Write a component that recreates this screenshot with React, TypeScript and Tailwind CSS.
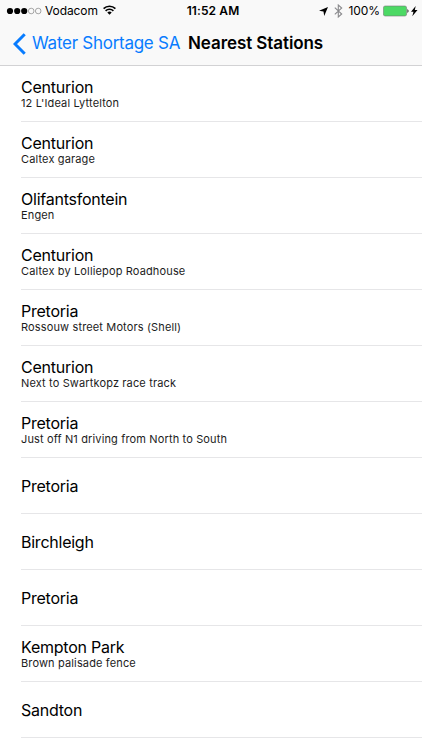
const rows: [string, string?][] = [
  ["Centurion", "12 L'Ideal Lyttelton"],
  ["Centurion", "Caltex garage"],
  ["Olifantsfontein", "Engen"],
  ["Centurion", "Caltex by Lolliepop Roadhouse"],
  ["Pretoria", "Rossouw street Motors (Shell)"],
  ["Centurion", "Next to Swartkopz race track"],
  ["Pretoria", "Just off N1 driving from North to South"],
  ["Pretoria"],
  ["Birchleigh"],
  ["Pretoria"],
  ["Kempton Park", "Brown palisade fence"],
  ["Sandton"],
];

function StatusBar() {
  return (
    <div className="flex h-[22px] items-center justify-between pl-[6px] pr-[4px] text-[12px] leading-none">
      <div className="flex w-[130px] items-center">
        <svg width="36" height="8" viewBox="0 0 36 8">
          <circle cx="4" cy="4" r="3.1" />
          <circle cx="11.2" cy="4" r="3.1" />
          <circle cx="18.2" cy="4" r="3.1" />
          <circle cx="25.2" cy="4" r="2.8" fill="none" stroke="#555" strokeWidth=".5" />
          <circle cx="32.2" cy="4" r="2.8" fill="none" stroke="#555" strokeWidth=".5" />
        </svg>
        <span className="ml-[3px] tracking-[-0.1px]">Vodacom</span>
        <svg className="mb-[2px] ml-[5px]" width="13" height="10" viewBox="0 0 13 10" fill="none" stroke="#000" strokeWidth="1.6">
          <path d="M.6 3.6a8.4 8.4 0 0 1 11.8 0M2.6 5.9a5.5 5.5 0 0 1 7.8 0" />
          <path d="M4.3 7.5a3.1 3.1 0 0 1 4.4 0L6.5 9.8z" fill="#000" stroke="none" />
        </svg>
      </div>
      <span className="pl-[2px] font-semibold tracking-[0.1px]">11:52 AM</span>
      <div className="flex w-[130px] items-center justify-end">
        <svg width="9" height="9" viewBox="0 0 9 9"><path d="M9 0 5.2 9 4.5 4.5 0 3.8z" /></svg>
        <svg className="ml-[6px]" width="9" height="14" viewBox="0 0 9 14" fill="none" stroke="#8a8a8d" strokeWidth="1.1"><path d="M.8 3.7 7.7 10 4.3 13V1L7.7 4 .8 10.3" /></svg>
        <span className="ml-[6px] tracking-[-0.1px]">100%</span>
        <svg className="ml-[3px]" width="35" height="12" viewBox="0 0 35 12">
          <rect x=".4" y="1" width="23.2" height="10" rx="1.8" fill="#4cd964" stroke="#777" strokeWidth=".6" />
          <path d="M24.5 4q2 2 0 4z" />
          <path d="M32.7 1 28 6.7h2.5L29.3 11.2l5.2-6.1h-2.7z" />
        </svg>
      </div>
    </div>
  );
}

export default function App() {
  return (
    <div className="h-[750px] w-[422px] overflow-hidden bg-white font-['Inter','Liberation_Sans',sans-serif] text-black">
      <header className="h-[66px] border-b border-[#d2d2d4] bg-[#f9f9f9]">
        <StatusBar />
        <div className="flex h-[43px] items-center pl-[13px] text-[17px]">
          <svg width="13" height="22" viewBox="0 0 13 22" fill="none" stroke="#087cff" strokeWidth="3"><path d="M11.7 1.2 2 11l9.7 9.8" /></svg>
          <span className="ml-[6px] w-[156px] whitespace-nowrap tracking-[-0.27px] text-[#087cff]">Water Shortage SA</span>
          <h1 className="whitespace-nowrap font-semibold tracking-[-0.08px]">Nearest Stations</h1>
        </div>
      </header>
      <ul className="pl-[21px]">
        {rows.map(([name, detail], i) => (
          <li key={i} className="flex h-14 flex-col justify-center border-b border-[#e6e6e8]">
            <span className={`text-[16px] leading-[19px] tracking-[-0.24px] ${detail ? "pt-[1px] -mb-[1px]" : "pt-[1px]"}`}>{name}</span>
            {detail && <span className="text-[11px] leading-[14px] tracking-[0.14px] text-[#1c1c1c]">{detail}</span>}
          </li>
        ))}
      </ul>
    </div>
  );
}
